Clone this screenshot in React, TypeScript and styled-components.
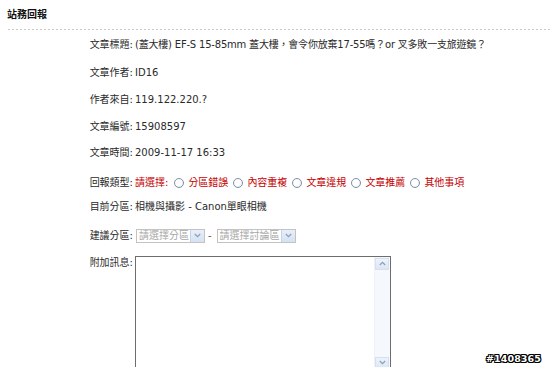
import React from "react";
import styled, { createGlobalStyle } from "styled-components";

const Global = createGlobalStyle`
  html, body { margin: 0; padding: 0; background: #fff; }
  body {
    font-family: "DejaVu Sans", "Noto Sans CJK TC", sans-serif;
    font-size: 10px;
    color: #2a2a2a;
  }
`;

const Page = styled.div`
  position: relative;
  width: 550px;
  height: 367px;
  overflow: hidden;
  background: #fff;
`;

const Header = styled.div`
  height: 26px;
  padding: 0 0 3px 7px;
  display: flex;
  align-items: center;
  font-weight: bold;
  font-size: 10px;
  color: #111;
`;

const Divider = styled.div`
  margin-left: 8px;
  height: 1px;
  background: repeating-linear-gradient(to right, #cacaca 0 2px, transparent 2px 4px);
`;

const Form = styled.div`
  display: flex;
  flex-direction: column;
`;

const Row = styled.div<{ $h: number; $top?: boolean }>`
  height: ${(p) => p.$h}px;
  display: grid;
  grid-template-columns: 133px 1fr;
  column-gap: 2px;
  align-items: ${(p) => (p.$top ? "start" : "center")};
`;

const Label = styled.div`
  text-align: right;
  white-space: nowrap;
  line-height: 14px;
`;

const Value = styled.div<{ $tight?: boolean }>`
  white-space: nowrap;
  line-height: 14px;
  display: flex;
  align-items: center;
  letter-spacing: ${(p) => (p.$tight ? "-0.2px" : "normal")};
`;

const Red = styled.span`
  color: #c40000;
`;

const Prompt = styled(Red)`
  margin-right: 6px;
`;

const RadioItem = styled.label`
  display: inline-flex;
  align-items: center;
  margin-right: 5px;
  color: #c40000;
`;

const RadioDot = styled.span`
  box-sizing: border-box;
  width: 10px;
  height: 10px;
  border-radius: 50%;
  border: 1px solid #7d8fa6;
  background: radial-gradient(circle at 40% 40%, #fff 0 40%, #e4e9ef 100%);
  margin-right: 4px;
`;

const Select = styled.div<{ $w: number; $lead?: boolean }>`
  box-sizing: border-box;
  width: ${(p) => p.$w}px;
  height: 14px;
  margin-left: ${(p) => (p.$lead ? "1px" : "0")};
  border: 1px solid #c3c3c3;
  display: flex;
  align-items: stretch;
  color: #a8a8a8;
  background: #fff;
`;

const SelectText = styled.span`
  flex: 1;
  padding-left: 2px;
  line-height: 12px;
  white-space: nowrap;
`;

const SelectArrow = styled.span`
  width: 13px;
  background: linear-gradient(#e8eff9, #d5e2f3);
  border-left: 1px solid #c5d4ea;
  display: flex;
  align-items: center;
  justify-content: center;
`;

const Dash = styled.span`
  margin: 0 5px 0 3px;
  color: #555;
`;

const TextBox = styled.div`
  box-sizing: border-box;
  width: 256px;
  height: 115px;
  border: 1px solid #6d6d6d;
  display: flex;
  background: #fff;
`;

const Area = styled.textarea`
  flex: 1;
  border: none;
  outline: none;
  resize: none;
  margin: 0;
  padding: 0;
  font: inherit;
  overflow: hidden;
`;

const ScrollBar = styled.div`
  width: 14px;
  padding: 1px 1px 1px 0;
  display: flex;
  flex-direction: column;
  background: #f5f8fc;
  border-left: 1px solid #eef2f7;
`;

const ScrollBtn = styled.div`
  height: 12px;
  box-sizing: border-box;
  border: 1px solid #d6e0ee;
  background: linear-gradient(#eef3fa, #dce6f3);
  display: flex;
  align-items: center;
  justify-content: center;
`;

const Track = styled.div`
  flex: 1;
`;

const Watermark = styled.div`
  position: absolute;
  right: 9px;
  bottom: 3px;
  font-family: "DejaVu Sans", sans-serif;
  font-weight: bold;
  font-size: 9.5px;
  color: #fff;
  letter-spacing: 0.1px;
  text-shadow:
    1px 0 0 #000, -1px 0 0 #000, 0 1px 0 #000, 0 -1px 0 #000,
    1px 1px 0 #000, -1px -1px 0 #000, 1px -1px 0 #000, -1px 1px 0 #000;
`;

const Chevron = ({ up }: { up?: boolean }) => (
  <svg width="7" height="5" viewBox="0 0 7 5">
    <path
      d={up ? "M0.8 4 L3.5 1.3 L6.2 4" : "M0.8 1 L3.5 3.7 L6.2 1"}
      fill="none"
      stroke="#8aa0bd"
      strokeWidth="1.3"
    />
  </svg>
);

const types = ["分區錯誤", "內容重複", "文章違規", "文章推薦", "其他事項"];

export default function App() {
  return (
    <Page>
      <Global />
      <Header>站務回報</Header>
      <Divider />
      <Form>
        <Row $h={30}>
          <Label>文章標題:</Label>
          <Value $tight>(蓋大樓) EF-S 15-85mm 蓋大樓，會令你放棄17-55嗎？or 叉多敗一支旅遊鏡？</Value>
        </Row>
        <Row $h={26.7}>
          <Label>文章作者:</Label>
          <Value>ID16</Value>
        </Row>
        <Row $h={26.7}>
          <Label>作者來自:</Label>
          <Value>119.122.220.?</Value>
        </Row>
        <Row $h={26.7}>
          <Label>文章編號:</Label>
          <Value>15908597</Value>
        </Row>
        <Row $h={26.7}>
          <Label>文章時間:</Label>
          <Value>2009-11-17 16:33</Value>
        </Row>
        <Row $h={31.6}>
          <Label>回報類型:</Label>
          <Value>
            <Prompt>請選擇:</Prompt>
            {types.map((t) => (
              <RadioItem key={t}>
                <RadioDot />
                {t}
              </RadioItem>
            ))}
          </Value>
        </Row>
        <Row $h={17}>
          <Label>目前分區:</Label>
          <Value>相機與攝影 - Canon單眼相機</Value>
        </Row>
        <Row $h={40.4}>
          <Label>建議分區:</Label>
          <Value>
            <Select $w={69} $lead>
              <SelectText>請選擇分區</SelectText>
              <SelectArrow>
                <Chevron />
              </SelectArrow>
            </Select>
            <Dash>-</Dash>
            <Select $w={79}>
              <SelectText>請選擇討論區</SelectText>
              <SelectArrow>
                <Chevron />
              </SelectArrow>
            </Select>
          </Value>
        </Row>
        <Row $h={115} $top>
          <Label>附加訊息:</Label>
          <TextBox>
            <Area />
            <ScrollBar>
              <ScrollBtn>
                <Chevron up />
              </ScrollBtn>
              <Track />
              <ScrollBtn>
                <Chevron />
              </ScrollBtn>
            </ScrollBar>
          </TextBox>
        </Row>
      </Form>
      <Watermark>#1408365</Watermark>
    </Page>
  );
}
